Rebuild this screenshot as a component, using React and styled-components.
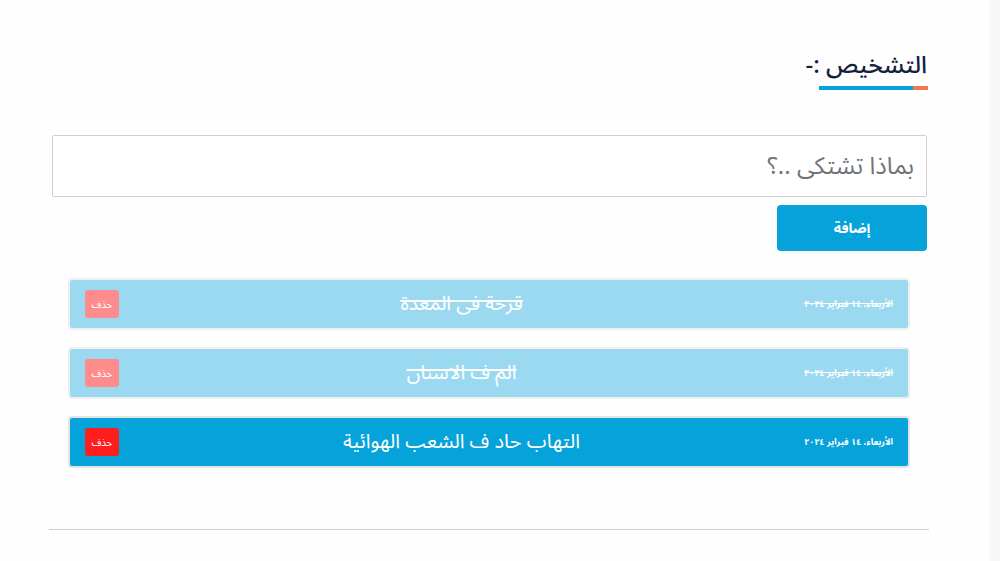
import React from 'react';
import styled, { createGlobalStyle } from 'styled-components';

const GlobalStyle = createGlobalStyle`
  body {
    margin: 0;
    background-color: #fefefe;
    font-family: "Noto Sans Arabic", "DejaVu Sans", "Noto Sans", sans-serif;
  }
`;

const Layout = styled.div`
  display: flex;
  min-height: 100vh;
`;

const Main = styled.main`
  flex: 1;
  direction: rtl;
  padding: 50px 63px 0 52px;
  background-color: #fefefe;
`;

const SideStrip = styled.div`
  width: 10px;
  background-color: #f7f7f7;
`;

const TitleBlock = styled.div`
  display: flex;
  flex-direction: column;
  align-items: flex-start;
  margin-bottom: 45px;
`;

const Title = styled.h2`
  margin: 0;
  font-size: 24px;
  font-weight: 500;
  color: #14213d;
  line-height: 32px;
`;

const Underline = styled.div`
  display: flex;
  width: 109px;
  height: 4px;
  margin-top: 4px;
  margin-right: -1px;
`;

const UnderlineAccent = styled.span`
  width: 15px;
  background-color: #f0794e;
`;

const UnderlineMain = styled.span`
  flex: 1;
  background-color: #06a3da;
`;

const Input = styled.input`
  display: block;
  box-sizing: border-box;
  width: 100%;
  height: 62px;
  padding: 0 12px;
  border: 1px solid #cfd0d4;
  border-radius: 2px;
  background: #fff;
  font-family: inherit;
  font-size: 24px;
  direction: rtl;

  &::placeholder {
    color: #6f7378;
  }
`;

const AddButton = styled.button`
  display: block;
  width: 150px;
  height: 46px;
  margin-top: 8px;
  border: none;
  border-radius: 4px;
  background-color: #06a3da;
  color: #fff;
  font-family: inherit;
  font-size: 14px;
  font-weight: bold;
`;

const List = styled.ul`
  list-style: none;
  margin: 27px 0 0;
  padding: 0 17px 0 16px;
  display: flex;
  flex-direction: column;
  gap: 17px;
`;

const Item = styled.li`
  display: flex;
  align-items: center;
  height: 48px;
  padding: 0 15px;
  border: 2px solid ${p => (p.$done ? '#efefef' : '#e4e4e4')};
  border-radius: 4px;
  background-color: ${p => (p.$done ? '#9bd9f0' : '#06a3da')};
  color: #fff;
`;

const ItemDate = styled.span`
  font-size: 9px;
  font-weight: bold;
  text-decoration: ${p => (p.$done ? 'line-through' : 'none')};
`;

const ItemText = styled.span`
  flex: 1;
  text-align: center;
  font-size: 20px;
  text-decoration: ${p => (p.$done ? 'line-through' : 'none')};
`;

const DeleteButton = styled.button`
  width: 34px;
  height: 28px;
  padding: 0;
  border: none;
  border-radius: 3px;
  background-color: ${p => (p.$done ? '#ff8c8c' : '#ff1e1e')};
  color: #fff;
  font-family: inherit;
  font-size: 10px;
`;

const Divider = styled.hr`
  margin: 61px -2px 0 -3px;
  border: none;
  border-top: 1px solid #cfcfcf;
`;

const items = [
  { id: 1, text: 'قرحة فى المعدة', date: 'الأربعاء، ١٤ فبراير ٢٠٢٤', done: true },
  { id: 2, text: 'الم ف الاسنان', date: 'الأربعاء، ١٤ فبراير ٢٠٢٤', done: true },
  { id: 3, text: 'التهاب حاد ف الشعب الهوائية', date: 'الأربعاء، ١٤ فبراير ٢٠٢٤', done: false },
];

const App = () => {
  return (
    <>
      <GlobalStyle />
      <Layout>
        <Main>
          <TitleBlock>
            <Title>التشخيص :-</Title>
            <Underline>
              <UnderlineAccent />
              <UnderlineMain />
            </Underline>
          </TitleBlock>

          <Input placeholder="بماذا تشتكى ..؟" />
          <AddButton>إضافة</AddButton>

          <List>
            {items.map(item => (
              <Item key={item.id} $done={item.done}>
                <ItemDate $done={item.done}>{item.date}</ItemDate>
                <ItemText $done={item.done}>{item.text}</ItemText>
                <DeleteButton $done={item.done}>حذف</DeleteButton>
              </Item>
            ))}
          </List>

          <Divider />
        </Main>
        <SideStrip />
      </Layout>
    </>
  );
};

export default App;
